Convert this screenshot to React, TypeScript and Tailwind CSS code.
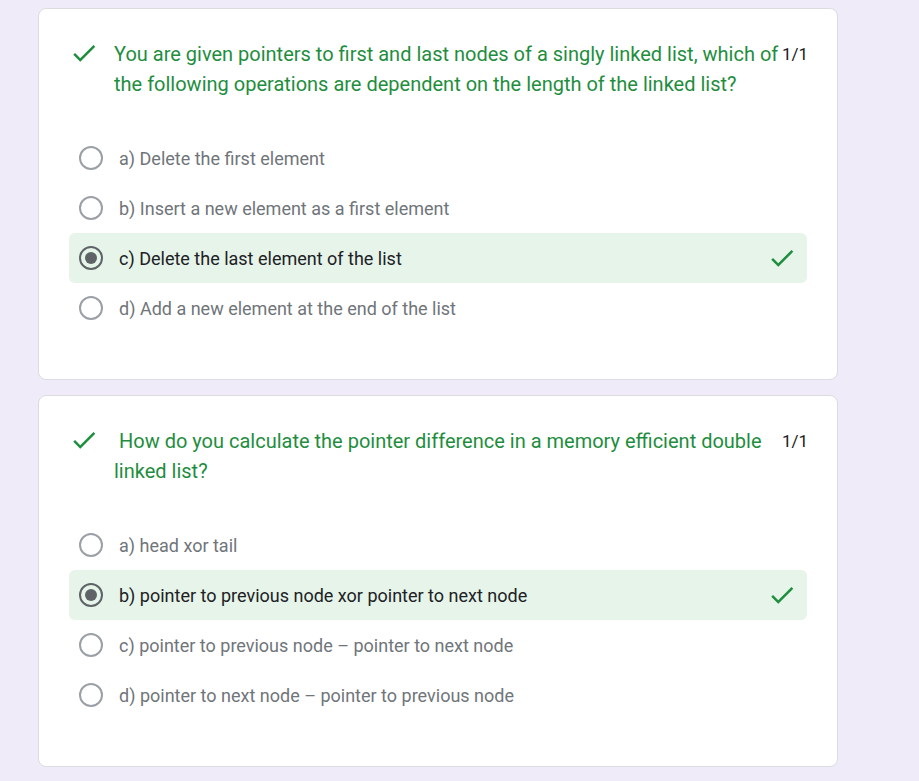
const questions = [
  {
    title:
      'You are given pointers to first and last nodes of a singly linked list, which of the following operations are dependent on the length of the linked list?',
    options: [
      'a) Delete the first element',
      'b) Insert a new element as a first element',
      'c) Delete the last element of the list',
      'd) Add a new element at the end of the list',
    ],
    picked: 2,
  },
  {
    title: '\u00a0How do you calculate the pointer difference in a memory efficient double linked list?',
    options: [
      'a) head xor tail',
      'b) pointer to previous node xor pointer to next node',
      'c) pointer to previous node \u2013 pointer to next node',
      'd) pointer to next node \u2013 pointer to previous node',
    ],
    picked: 1,
  },
];

function Check({ className = '' }: { className?: string }) {
  return (
    <svg viewBox="0 0 24 24" className={`w-[30px] h-[30px] shrink-0 fill-[#1e8e3e] ${className}`}>
      <path d="M9 16.17L4.83 12l-1.42 1.41L9 19 21 7l-1.41-1.41z" />
    </svg>
  );
}

function Radio({ on }: { on: boolean }) {
  if (on) {
    return (
      <div className="w-6 h-6 rounded-full border-2 border-[#5f6368] flex items-center justify-center shrink-0">
        <div className="w-3 h-3 rounded-full bg-[#5f6368]" />
      </div>
    );
  }
  return <div className="w-6 h-6 rounded-full border-2 border-[#9aa0a6] shrink-0" />;
}

export default function App() {
  return (
    <div className="min-h-[781px] bg-[#f0ebf8] pt-2 pl-[38px] font-['Roboto',sans-serif]">
      <div className="w-[800px] flex flex-col gap-[15px]">
        {questions.map((q, qi) => (
          <div key={qi} className="bg-white border border-[#dadce0] rounded-lg pt-[30px] pb-[46px] px-[30px]">
            <div className="flex items-start">
              <Check className="-mt-px" />
              <div className="flex-1 ml-[15px] text-[20px] leading-[30px] text-[#1e8e3e]">{q.title}</div>
              <div className="ml-0.5 w-[25px] text-[17px] leading-[30px] text-[#202124]">1/1</div>
            </div>
            <div className="mt-[34px] flex flex-col">
              {q.options.map((o, oi) => {
                const on = oi === q.picked;
                return (
                  <div
                    key={oi}
                    className={`h-[50px] flex items-center pl-[10px] pr-[10px] rounded-md ${on ? 'bg-[#e6f4ea]' : ''}`}
                  >
                    <Radio on={on} />
                    <span className={`ml-4 flex-1 text-[18px] ${on ? 'text-[#202124]' : 'text-[#70757a]'}`}>{o}</span>
                    {on && <Check />}
                  </div>
                );
              })}
            </div>
          </div>
        ))}
      </div>
    </div>
  );
}
